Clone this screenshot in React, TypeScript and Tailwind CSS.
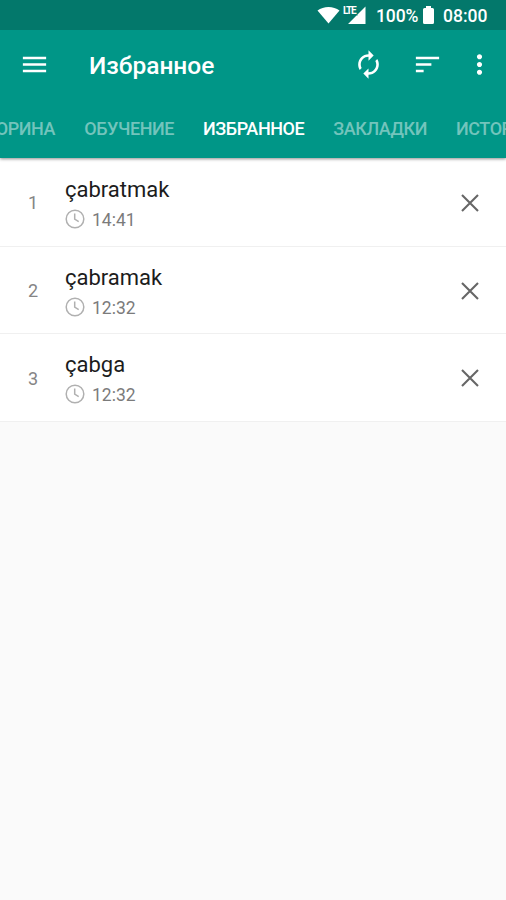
import React, { useState } from 'react';
import { MdAutorenew, MdMenu, MdMoreVert, MdSort } from 'react-icons/md';

interface Favorite {
  id: number;
  word: string;
  time: string;
}

const INITIAL: Favorite[] = [
  { id: 1, word: 'çabratmak', time: '14:41' },
  { id: 2, word: 'çabramak', time: '12:32' },
  { id: 3, word: 'çabga', time: '12:32' },
];

const TABS = [
  { label: 'ВИКТОРИНА', width: 'w-[106px]' },
  { label: 'ОБУЧЕНИЕ', width: 'w-[90px]' },
  { label: 'ИЗБРАННОЕ', width: 'w-[101px]' },
  { label: 'ЗАКЛАДКИ', width: 'w-[94px]' },
  { label: 'ИСТОРИЯ', width: 'w-[80px]' },
];

const StatusBar = () => (
  <div className="flex h-[30px] items-center justify-end bg-[#03786b] pr-[18px] text-white">
    <svg width="23" height="18" viewBox="0 0 23 18" fill="currentColor">
      <path d="M0.5 4.5C6.5-.3 16.5-.3 22.500 4.500L11.500 17.500z" />
    </svg>
    {/* LTE label sits in the corner of the signal triangle */}
    <div className="relative ml-[3px] h-[18px] w-[23px]">
      <svg width="23" height="18" viewBox="0 0 23 18" fill="currentColor">
        <path d="M22.5 0.5v17.500h-17.500l8.500-8.500h1v-1z" />
      </svg>
      <span className="absolute left-0 top-[-1px] text-[10px] font-bold leading-[11px] tracking-[-1.2px]">LTE</span>
    </div>
    <span className="ml-[10px] w-[42px] whitespace-nowrap pt-[2px] text-[17.5px] font-medium leading-5 tracking-[-0.1px]">100%</span>
    <svg className="ml-[4px]" width="13" height="20" viewBox="0 0 13 20" fill="currentColor">
      <path d="M4 1h5v2h1.500A1.500 1.500 0 0 1 12 4.500v13a1.500 1.500 0 0 1-1.500 1.500h-8A1.500 1.500 0 0 1 1 17.500v-13A1.500 1.500 0 0 1 2.500 3H4z" />
    </svg>
    <span className="ml-[8px] w-[45px] whitespace-nowrap pt-[2px] text-[17.5px] font-medium leading-5">08:00</span>
  </div>
);

const ClockIcon = () => (
  <svg width="20" height="20" viewBox="0 0 20 20" fill="none" stroke="#b0b0b0" strokeWidth="1.5">
    <circle cx="10" cy="10" r="8.8" />
    <path d="M9.700 4.500v5.700l4 2.500" />
  </svg>
);

const CloseIcon = () => (
  <svg width="18" height="18" viewBox="0 0 18 18" fill="none" stroke="#666" strokeWidth="2.1">
    <path d="M1 1l16 16M17 1L1 17" />
  </svg>
);

export default function App() {
  const [items, setItems] = useState<Favorite[]>(INITIAL);
  const [active, setActive] = useState('ИЗБРАННОЕ');

  return (
    <div className="flex h-[900px] w-[506px] flex-col overflow-hidden bg-[#fafafa] font-['Roboto','Noto_Sans',sans-serif]">
      <header className="relative z-10 shrink-0 bg-[#009687] text-white shadow-[0_1px_3px_rgba(0,0,0,0.45)]">
        <StatusBar />
        <div className="flex h-[69px] items-center pl-[19px] pr-[11px]">
          <button aria-label="Menu"><MdMenu size={31} /></button>
          <h1 className="ml-[39px] flex-1 whitespace-nowrap pt-[2px] text-[24.5px] font-medium leading-8">Избранное</h1>
          <button aria-label="Refresh" className="mr-[28px]"><MdAutorenew size={31} /></button>
          <button aria-label="Sort" className="mr-[21px]"><MdSort size={31} /></button>
          <button aria-label="More"><MdMoreVert size={31} /></button>
        </div>
        <nav className="flex h-[59px] w-[506px] overflow-hidden">
          <div className="-ml-[51px] flex shrink-0 items-center gap-[29px]">
            {TABS.map((tab) => (
              <button
                key={tab.label}
                onClick={() => setActive(tab.label)}
                className={`${tab.width} shrink-0 whitespace-nowrap pt-[1px] text-right text-[18px] font-medium leading-6 tracking-[-0.43px] last:text-left ${active === tab.label ? 'text-white' : 'text-[#73c4bc]'}`}
              >
                {tab.label}
              </button>
            ))}
          </div>
        </nav>
      </header>

      <main>
        <div className="h-px bg-white" />
        {items.map((item, i) => (
          <div key={item.id} className="flex h-[87.7px] items-center border-b border-[#f0f0f0] bg-white pr-[27px]">
            <span className="w-[65px] pl-[28px] pt-[2px] text-[18px] leading-6 text-[#858585]">{i + 1}</span>
            <div className="flex-1 pt-[2px]">
              <div className="pt-[1px] text-[22px] leading-[28px] text-[#1c1c1c]">{item.word}</div>
              <div className="mt-[2px] flex items-center gap-[7px]">
                <ClockIcon />
                <span className="pt-[2px] text-[17.5px] leading-6 text-[#7b7b7b]">{item.time}</span>
              </div>
            </div>
            <button
              aria-label="Remove"
              className="pt-[1px]"
              onClick={() => setItems(items.filter((x) => x.id !== item.id))}
            >
              <CloseIcon />
            </button>
          </div>
        ))}
      </main>
    </div>
  );
}
